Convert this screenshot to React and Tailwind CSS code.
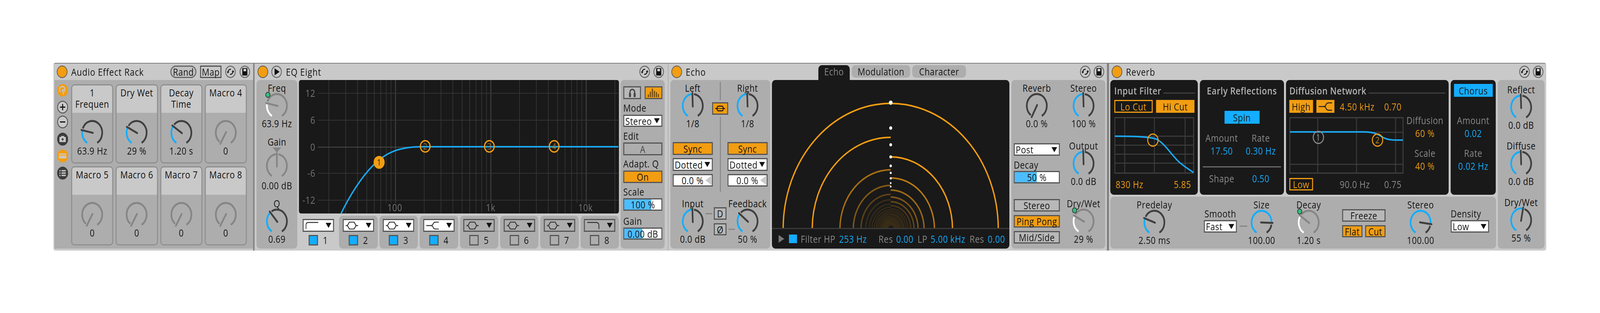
const ORANGE = "#f29d12";
const BLUE = "#14adff";

const polar = (a, r) => {
  const t = (a * Math.PI) / 180;
  return [36 + r * Math.sin(t), 34 - r * Math.cos(t)];
};

const arc = (from, to, r = 30) => {
  const [x1, y1] = polar(from, r);
  const [x2, y2] = polar(to, r);
  return `M${x1} ${y1}A${r} ${r} 0 ${to - from > 180 ? 1 : 0} 1 ${x2} ${y2}`;
};

const KNOB_COLORS = {
  on: { fill: BLUE, rest: "#3f3f3f", hand: "#3f3f3f" },
  off: { fill: "#858585", rest: "#858585", hand: "#858585" },
  dark: { fill: "#3f3f3f", rest: "#3f3f3f", hand: "#3f3f3f" },
  mod: { fill: "#ffffff", rest: "#858585", hand: "#858585" },
};

function Knob({ angle = 0, kind = "on" }) {
  const c = KNOB_COLORS[kind];
  const [hx, hy] = polar(angle, 33);
  const [bx, by] = polar(angle + 180, 2);
  return (
    <svg width="72" height="68" viewBox="0 0 72 68" className="block shrink-0 overflow-visible">
      {angle > -146 && <path d={arc(-150, angle - 3)} fill="none" stroke={c.fill} strokeWidth="5" />}
      <path d={arc(angle + 9, 150)} fill="none" stroke={c.rest} strokeWidth="5" />
      <line x1={bx} y1={by} x2={hx} y2={hy} stroke={c.hand} strokeWidth="5" strokeLinecap="round" />
      {kind === "mod" && <circle cx="9" cy="6" r="6.5" fill="#2fc27c" stroke="#333" strokeWidth="2" />}
    </svg>
  );
}

function Unit({ label, value, angle, kind, className = "w-[120px]" }) {
  return (
    <div className={`flex flex-col items-center ${className}`}>
      <div className="h-[28px] leading-[28px] whitespace-nowrap">{label}</div>
      <div className="-mt-[2px]"><Knob angle={angle} kind={kind} /></div>
      <div className="-mt-[3px] h-[28px] leading-[28px] whitespace-nowrap">{value}</div>
    </div>
  );
}

function Led() {
  return <div className="h-[32px] w-[32px] shrink-0 rounded-full border-2 border-[#5a5a5a] bg-[#f29d12]" />;
}

function Title({ children, className = "" }) {
  return <span className={`font-medium whitespace-nowrap tracking-[1px] text-[#111] ${className}`}>{children}</span>;
}

function HotSwap() {
  return (
    <svg width="32" height="32" viewBox="0 0 32 32" className="shrink-0">
      <circle cx="16" cy="16" r="14.5" fill="#c9c9c9" stroke="#666" strokeWidth="2.5" />
      <path d="M8.5 17a7.5 7.5 0 0 1 9-7.3M23.5 15a7.5 7.5 0 0 1-9 7.3" fill="none" stroke="#111" strokeWidth="2.6" />
      <path d="M4.8 15.5h7.4l-3.7 5zM27.2 16.5h-7.4l3.7-5z" fill="#111" />
    </svg>
  );
}

function Save() {
  return (
    <svg width="32" height="32" viewBox="0 0 32 32" className="shrink-0">
      <circle cx="16" cy="16" r="14.5" fill="#c9c9c9" stroke="#666" strokeWidth="2.5" />
      <path d="M9 7h14v18H9z" fill="#111" stroke="#111" strokeLinejoin="round" />
      <rect x="12" y="8.5" width="8" height="6" fill="#d8d8d8" />
    </svg>
  );
}

function Box({ className = "", children, tone = "bg-[#b8b8b8]" }) {
  return (
    <div className={`flex shrink-0 items-center justify-center whitespace-nowrap border-[3px] border-[#555] ${tone} ${className}`}>
      {children}
    </div>
  );
}

function Arrow({ fill = "#111" }) {
  return (
    <svg width="17" height="13" viewBox="0 0 17 13" className="shrink-0">
      <path d="M0 0h17L8.5 13z" fill={fill} />
    </svg>
  );
}

function Select({ text, className = "" }) {
  return (
    <div className={`flex shrink-0 items-center justify-between border-[3px] border-[#555] bg-white pl-[3px] pr-[5px] ${className}`}>
      <span className="whitespace-nowrap">{text}</span>
      <Arrow />
    </div>
  );
}

function Slider({ text, fill, className = "" }) {
  return (
    <div className={`relative flex shrink-0 items-center justify-center border-[3px] border-[#555] bg-white ${className}`}>
      <div className="absolute inset-y-0 left-0 bg-[#4dbdff]" style={{ width: fill }} />
      <span className="relative whitespace-nowrap">{text}</span>
    </div>
  );
}

function Device({ className = "", children }) {
  return <div className={`flex h-full shrink-0 flex-col ${className}`}>{children}</div>;
}

function TitleBar({ className = "", children }) {
  return <div className={`flex h-[42px] shrink-0 items-center ${className}`}>{children}</div>;
}

function SideIcon({ kind, className = "" }) {
  return (
    <svg width="33" height="33" viewBox="0 0 33 33" className={`shrink-0 ${className}`}>
      {kind === "hand" && (
        <>
          <circle cx="16.5" cy="16.5" r="16" fill={ORANGE} />
          <path d="M10.5 21a8 8 0 1 1 11-1M15 17a3 3 0 0 1 5-1M16 16l4 11" fill="none" stroke="#c9c9c9" strokeWidth="3" />
        </>
      )}
      {(kind === "plus" || kind === "minus") && (
        <>
          <circle cx="16.5" cy="16.5" r="15" fill="#c9c9c9" stroke="#555" strokeWidth="2.5" />
          <path d="M8.5 16.5h16" stroke="#111" strokeWidth="3" />
          {kind === "plus" && <path d="M16.5 8.5v16" stroke="#111" strokeWidth="3" />}
        </>
      )}
      {kind === "folder" && (
        <>
          <circle cx="16.5" cy="16.5" r="16.5" fill="#3c3c3c" />
          <path d="M7 11h5V8.5h9V11h5v13H7z" fill="#c9c9c9" />
          <path d="M16.5 13.5v7M13 17h7" stroke="#3c3c3c" strokeWidth="2.5" />
        </>
      )}
      {kind === "chain" && (
        <>
          <circle cx="16.5" cy="16.5" r="16.5" fill={ORANGE} />
          <rect x="5.5" y="10" width="22" height="13" rx="2" fill="#c9c9c9" />
          <path d="M6 14.5h21" stroke="#e8b45f" strokeWidth="5" />
        </>
      )}
      {kind === "list" && (
        <>
          <circle cx="16.5" cy="16.5" r="16.5" fill="#3c3c3c" />
          <path d="M13 10.5h13M13 16.5h13M13 22.5h13M7 10.5h3M7 16.5h3M7 22.5h3" stroke="#c9c9c9" strokeWidth="3.5" />
        </>
      )}
    </svg>
  );
}

const MACROS = [
  { label: ["1", "Frequen"], value: "63.9 Hz", angle: -78, kind: "on" },
  { label: ["Dry Wet"], value: "29 %", angle: -63, kind: "on" },
  { label: ["Decay", "Time"], value: "1.20 s", angle: -56, kind: "on" },
  { label: ["Macro 4"], value: "0", angle: -150, kind: "off" },
  { label: ["Macro 5"], value: "0", angle: -150, kind: "off" },
  { label: ["Macro 6"], value: "0", angle: -150, kind: "off" },
  { label: ["Macro 7"], value: "0", angle: -150, kind: "off" },
  { label: ["Macro 8"], value: "0", angle: -150, kind: "off" },
];

function Rack() {
  return (
    <Device className="w-[598px]">
      <TitleBar className="pl-[10px] pr-[9px]">
        <Led />
        <Title className="ml-[11px]">Audio Effect Rack</Title>
        <div className="ml-auto flex items-center gap-[11px]">
          <Box tone="bg-[#c0c0c0]" className="h-[32px] w-[78px] rounded-full !border-[#666]">Rand</Box>
          <Box tone="bg-[#c9c9c9]" className="h-[32px] w-[64px]">Map</Box>
          <HotSwap />
          <Save />
        </div>
      </TitleBar>
      <div className="ml-[3px] flex h-[432px] bg-[#adadad]">
        <div className="flex w-[50px] shrink-0 flex-col items-center pr-[1px] pt-[10px]">
          <SideIcon kind="hand" />
          <SideIcon kind="plus" className="mt-[10px]" />
          <SideIcon kind="minus" className="mt-[5px]" />
          <SideIcon kind="folder" className="mt-[11px]" />
          <SideIcon kind="chain" className="mt-[10px]" />
          <SideIcon kind="list" className="mt-[11px]" />
        </div>
        <div className="grid w-[526px] grid-cols-4 grid-rows-[203px_203px] gap-[7px] pt-[11px]">
          {MACROS.map((m) => (
            <div key={m.label.join(" ")} className="flex flex-col items-center overflow-hidden rounded-[10px] border-[3px] border-[#8f8f8f]">
              <div className="h-[70px] w-full bg-[#c9c9c9] pt-[4px] text-center leading-[29px]">
                {m.label.map((l) => <div key={l}>{l}</div>)}
              </div>
              <div className="pt-[17px]"><Knob angle={m.angle} kind={m.kind} /></div>
              <div className="-mt-[2px] h-[28px] leading-[28px]">{m.value}</div>
            </div>
          ))}
        </div>
      </div>
    </Device>
  );
}

const DECADES = [10, 100, 1000, 10000];
const FREQ_LINES = DECADES.flatMap((d) => [2, 3, 4, 5, 6, 7, 8, 9, 10].map((n) => n * d)).filter((f) => f >= 20 && f <= 20000);
const freqX = (f) => 289 + 285.5 * Math.log10(f / 100);
const isDecade = (f) => f === 100 || f === 1000 || f === 10000;
const stopsShort = (f) => [80, 90, 100, 900, 1000, 8000, 9000, 10000].includes(f);

function EqGraph() {
  const hLines = [34, 103, 172, 239, 308];
  const yLabels = ["12", "6", "0", "-6", "-12"];
  return (
    <svg width="958" height="342" viewBox="0 0 958 342" className="block overflow-visible rounded-[6px] bg-[#191919]">
      {FREQ_LINES.map((f) => (
        <line key={f} x1={freqX(f)} x2={freqX(f)} y1="0" y2={stopsShort(f) ? 315 : 342} stroke={isDecade(f) ? "#505050" : "#353535"} strokeWidth="2" />
      ))}
      {hLines.map((y, i) => (
        <line key={y} x1="57" x2="956" y1={y} y2={y} stroke={i === 2 ? "#4a4a4a" : "#333"} strokeWidth="2" />
      ))}
      {yLabels.map((t, i) => (
        <text key={t} x="49" y={hLines[i] + 9} textAnchor="end" fill="#757575" fontSize="25">{t}</text>
      ))}
      <text x="287" y="336" textAnchor="middle" fill="#757575" fontSize="25">100</text>
      <text x="574" y="336" textAnchor="middle" fill="#757575" fontSize="25">1k</text>
      <text x="858" y="336" textAnchor="middle" fill="#757575" fontSize="25">10k</text>
      <path d="M126 342C150 300 185 250 223 218C250 195 280 178 329 173C345 171 360 171 373 171H956" fill="none" stroke="#1aa8f2" strokeWidth="4" />
      <circle cx="240" cy="211" r="16.5" fill={ORANGE} />
      <text x="240" y="219" textAnchor="middle" fill="#222" fontSize="22">1</text>
      {[[378, "2"], [570, "3"], [764, "4"]].map(([x, t]) => (
        <g key={t}>
          <circle cx={x} cy="170" r="14.5" fill="none" stroke={ORANGE} strokeWidth="3.5" />
          <text x={x} y="178" textAnchor="middle" fill="#a87320" fontSize="22">{t}</text>
        </g>
      ))}
    </svg>
  );
}

function FilterIcon({ kind }) {
  const paths = {
    low: "M1 19V9Q1 2 8 2H38",
    bell: "M0 10H5L11 1H25L31 10H37M5 10L11 19H25L31 10",
    shelf: "M0 10H14Q19 10 21 5Q23 1 29 1H38M14 10Q19 10 21 15Q23 19 29 19H38",
    high: "M1 2H28Q36 2 36 10V19",
  };
  return (
    <svg width="38" height="20" viewBox="0 0 38 20" className="shrink-0">
      <path d={paths[kind]} fill="none" stroke="#333" strokeWidth="2.5" />
    </svg>
  );
}

const BANDS = [
  { n: 1, icon: "low", on: true, selected: true },
  { n: 2, icon: "bell", on: true },
  { n: 3, icon: "bell", on: true },
  { n: 4, icon: "shelf", on: true },
  { n: 5, icon: "bell" },
  { n: 6, icon: "bell" },
  { n: 7, icon: "bell" },
  { n: 8, icon: "high" },
];

function Band({ n, icon, on, selected }) {
  return (
    <div className={`flex flex-col items-center rounded-[10px] pt-[8px] ${selected ? "" : "bg-[#adadad]"}`}>
      <div className={`flex h-[33px] w-[94px] items-center justify-between border-[3px] border-[#555] pl-[6px] pr-[5px] ${on ? "bg-white" : ""}`}>
        <FilterIcon kind={icon} />
        <Arrow />
      </div>
      <div className="mt-[8px] flex h-[27px] items-center gap-[15px]">
        <div className={`h-[27px] w-[28px] border-[3px] border-[#555] ${on ? "bg-[#14adff]" : ""}`} />
        <span className="w-[15px] text-center leading-[27px]">{n}</span>
      </div>
    </div>
  );
}

function EqEight() {
  return (
    <Device className="w-[1238px]">
      <TitleBar className="pl-[9px] pr-[12px]">
        <Led />
        <svg width="32" height="32" viewBox="0 0 32 32" className="ml-[9px] shrink-0">
          <circle cx="16" cy="16" r="14.5" fill="#c9c9c9" stroke="#666" strokeWidth="2.5" />
          <path d="M10 7l15 9-15 9z" fill="#111" />
        </svg>
        <Title className="ml-[12px]">EQ Eight</Title>
        <div className="ml-auto flex items-center gap-[10px]">
          <HotSwap />
          <Save />
        </div>
      </TitleBar>
      <div className="flex h-[432px] pl-[6px]">
        <div className="flex w-[122px] shrink-0 flex-col items-center rounded-[10px] bg-[#adadad] pt-[6px]">
          <Unit label="Freq" value="63.9 Hz" angle={-78} kind="mod" />
          <div className="mt-[19px] h-[28px] leading-[28px]">Gain</div>
          <svg width="26" height="13" viewBox="0 0 26 13" className="mt-px shrink-0"><path d="M0 0h26L13 13z" fill="#858585" /></svg>
          <Knob angle={0} kind="off" />
          <div className="mt-[2px] h-[28px] leading-[28px]">0.00 dB</div>
          <div className="mt-[18px]"><Unit label="Q" value="0.69" angle={-41} /></div>
        </div>
        <div className="ml-[5px] flex w-[958px] shrink-0 flex-col">
          <EqGraph />
          <div className="mt-[6px] grid h-[84px] grid-cols-8 gap-[5px]">
            {BANDS.map((b) => <Band key={b.n} {...b} />)}
          </div>
        </div>
        <div className="ml-[5px] w-[132px] shrink-0 rounded-[10px] bg-[#adadad] pl-[8px] pt-[16px]">
          <div className="flex w-[117px] justify-between">
            <Box className="h-[33px] w-[53px]">
              <svg width="24" height="27" viewBox="0 0 24 27">
                <path d="M5 20V12a7 7 0 0 1 14 0v8" fill="none" stroke="#444" strokeWidth="3.5" />
                <rect x="2" y="14" width="6" height="11" rx="2" fill="#444" />
                <rect x="16" y="14" width="6" height="11" rx="2" fill="#444" />
              </svg>
            </Box>
            <Box tone="bg-[#f29d12]" className="h-[33px] w-[53px]">
              <svg width="36" height="22" viewBox="0 0 36 22">
                <path d="M2 22v-7M8 22V8M14 22V0M20 22V6M26 22V9M32 22v-8" stroke="#5d3f10" strokeWidth="3" />
              </svg>
            </Box>
          </div>
          <div className="mt-[8px] h-[28px] leading-[28px]">Mode</div>
          <Select text="Stereo" className="mt-[4px] h-[31px] w-[117px]" />
          <div className="mt-[9px] h-[28px] leading-[28px]">Edit</div>
          <Box tone="bg-[#adadad]" className="mt-[3px] h-[33px] w-[117px] text-[#444]">A</Box>
          <div className="mt-[7px] h-[28px] leading-[28px] whitespace-nowrap">Adapt. Q</div>
          <Box tone="bg-[#f29d12]" className="mt-[4px] h-[32px] w-[117px]">On</Box>
          <div className="mt-[8px] h-[28px] leading-[28px]">Scale</div>
          <Slider text="100 %" fill="73%" className="mt-[3px] h-[32px] w-[117px]" />
          <div className="mt-[12px] h-[28px] leading-[28px]">Gain</div>
          <Slider text="0.00 dB" fill="49%" className="mt-[3px] h-[31px] w-[117px]" />
        </div>
      </div>
    </Device>
  );
}

function TimeColumn({ label, angle }) {
  return (
    <div className="flex w-[120px] shrink-0 flex-col items-center pt-[6px]">
      <Unit label={label} value="1/8" angle={angle} />
      <Box tone="bg-[#f29d12]" className="mt-[34px] h-[33px] w-[120px]">Sync</Box>
      <Select text="Dotted" className="mt-[8px] h-[33px] w-[120px]" />
      <div className="mt-[8px] flex h-[32px] w-[120px] items-center justify-end border-[3px] border-[#555] bg-white pr-[1px]">
        <span className="whitespace-nowrap">0.0 %</span>
        <svg width="18" height="24" viewBox="0 0 18 24" className="ml-[6px] shrink-0"><path d="M18 0v24L0 12z" fill="#c9c9c9" /></svg>
      </div>
    </div>
  );
}

const LEFT_RINGS = [322, 235, 152, 112, 89, 75, 64, 56, 49, 43, 38, 33, 29, 25, 22, 19, 16, 13, 10];
const RIGHT_RINGS = [322, 185, 131, 100, 82, 70, 60, 52, 46, 40, 36, 31, 27, 24, 20, 17, 14, 11];
const DOTS = [[58, 5.5], [123, 4.5], [166, 4], [197, 4], [220, 3.5], [238, 3], [252, 3], [264, 2.5], [273, 2.5]];
const ringOpacity = (i, side) => Math.max(0.12, side === "r" ? 1 - i * 0.13 : 1 - i * 0.17);

function EchoDisplay() {
  const cx = 355.6;
  const base = 382;
  return (
    <svg width="711" height="379" viewBox="0 0 711 379" className="block">
      {LEFT_RINGS.map((r, i) => (
        <path key={`l${r}`} d={`M${cx - r} 382A${r} ${r} 0 0 1 ${cx} ${base - r}`} fill="none" stroke={ORANGE} strokeOpacity={i < 2 ? 1 : ringOpacity(i, "l")} strokeWidth="4" />
      ))}
      {RIGHT_RINGS.map((r, i) => (
        <path key={`r${r}`} d={`M${cx} ${base - r}A${r} ${r} 0 0 1 ${cx + r} 382`} fill="none" stroke={ORANGE} strokeOpacity={i < 2 ? 1 : ringOpacity(i, "r")} strokeWidth="4" />
      ))}
      {DOTS.map(([y, r]) => <circle key={y} cx={cx} cy={y} r={r} fill="#fff" />)}
    </svg>
  );
}

function Echo() {
  return (
    <Device className="w-[1313px]">
      <TitleBar className="pl-[9px] pr-[8px]">
        <Led />
        <Title className="ml-[11px] w-[397px]">Echo</Title>
        <div className="flex h-full items-start gap-[6px] pt-[4px]">
          <div className="flex h-[38px] w-[94px] items-center justify-center rounded-t-[10px] bg-[#191919] pb-[6px] text-[#8a8a8a]">Echo</div>
          <div className="flex h-[32px] w-[175px] items-center justify-center rounded-[10px] bg-[#adadad]">Modulation</div>
          <div className="flex h-[32px] w-[161px] items-center justify-center rounded-[10px] bg-[#adadad]">Character</div>
        </div>
        <div className="ml-auto flex items-center gap-[9px]">
          <HotSwap />
          <Save />
        </div>
      </TitleBar>
      <div className="flex h-[432px] pl-[6px]">
        <div className="w-[299px] shrink-0 rounded-[10px] bg-[#adadad] px-[7px]">
          <div className="flex h-[296px]">
            <TimeColumn label="Left" angle={-2} />
            <div className="flex w-[44px] shrink-0 flex-col items-center pt-[5px]">
              <div className="h-[46px] w-[3px] bg-[#858585]" />
              <Box tone="bg-[#f29d12]" className="mt-[6px] h-[32px] w-[48px]">
                <svg width="30" height="16" viewBox="0 0 30 16">
                  <path d="M0 8h6M24 8h6" stroke="#111" strokeWidth="2.5" />
                  <rect x="6" y="2" width="18" height="12" rx="3.5" fill="none" stroke="#111" strokeWidth="2.5" />
                  <path d="M6 8h18" stroke="#111" strokeWidth="1.5" />
                </svg>
              </Box>
              <div className="mt-[5px] h-[193px] w-[3px] bg-[#858585]" />
            </div>
            <TimeColumn label="Right" angle={-2} />
          </div>
          <div className="flex pt-[6px]">
            <Unit label="Input" value="0.0 dB" angle={-2} className="w-[120px] shrink-0" />
            <div className="w-[44px] shrink-0 pt-[24px]">
              <div className="-ml-[22px] flex w-max items-center gap-[5px]">
                <div className="h-[3px] w-[20px] bg-[#858585]" />
                <Box className="h-[32px] w-[38px]">D</Box>
              </div>
              <div className="ml-[3px] mt-[9px] flex w-max items-center gap-[6px]">
                <Box className="h-[31px] w-[38px]">Ø</Box>
                <div className="h-[3px] w-[19px] bg-[#858585]" />
              </div>
            </div>
            <Unit label="Feedback" value="50 %" angle={-51} className="w-[120px] shrink-0" />
          </div>
        </div>
        <div className="ml-[5px] flex w-[711px] shrink-0 flex-col overflow-hidden rounded-[10px] bg-[#191919]">
          <EchoDisplay />
          <div className="flex h-[53px] shrink-0 items-center border-t-[3px] border-[#3a3a3a] pl-[19px] text-[#8a8a8a]">
            <svg width="32" height="24" viewBox="0 0 32 24" className="shrink-0"><path d="M1 2l17 10L1 22z" fill="#777" /></svg>
            <div className="h-[22px] w-[24px] shrink-0 bg-[#14adff]" />
            <span className="ml-[11px] w-[115px] shrink-0 whitespace-nowrap">Filter HP</span>
            <span className="w-[118px] shrink-0 whitespace-nowrap text-[#14adff]">253 Hz</span>
            <span className="w-[53px] shrink-0">Res</span>
            <span className="w-[64px] shrink-0 text-[#14adff]">0.00</span>
            <span className="w-[39px] shrink-0">LP</span>
            <span className="w-[117px] shrink-0 whitespace-nowrap text-[#14adff]">5.00 kHz</span>
            <span className="w-[54px] shrink-0">Res</span>
            <span className="text-[#14adff]">0.00</span>
          </div>
        </div>
        <div className="ml-[6px] flex w-[281px] shrink-0 rounded-[10px] bg-[#adadad] pl-[7px] pt-[6px]">
          <div className="flex w-[138px] shrink-0 flex-col">
            <Unit label="Reverb" value="0.0 %" angle={-152} kind="dark" className="w-[138px]" />
            <Select text="Post" className="mt-[37px] h-[32px] w-[138px]" />
            <div className="mt-[9px] h-[28px] leading-[28px]">Decay</div>
            <Slider text="50 %" fill="50%" className="mt-[2px] h-[32px] w-[138px]" />
            <Box className="mt-[40px] h-[32px] w-[138px]">Stereo</Box>
            <Box tone="bg-[#f29d12]" className="mt-[9px] h-[32px] w-[138px]">Ping Pong</Box>
            <Box className="mt-[9px] h-[32px] w-[138px]">Mid/Side</Box>
          </div>
          <div className="ml-[6px] flex w-[130px] shrink-0 flex-col items-center">
            <Unit label="Stereo" value="100 %" angle={-2} />
            <div className="mt-[29px]"><Unit label="Output" value="0.0 dB" angle={-2} /></div>
            <div className="mt-[29px]"><Unit label="Dry/Wet" value="29 %" angle={-63} kind="mod" /></div>
          </div>
        </div>
      </div>
    </Device>
  );
}

function PanelTitle({ children, line = true }) {
  return (
    <div className="flex h-[28px] items-center gap-[6px]">
      <span className="whitespace-nowrap font-semibold text-[#b4b4b4]">{children}</span>
      {line && <div className="mt-[13px] h-[3px] flex-1 bg-[#3f3f3f]" />}
    </div>
  );
}

function DarkBtn({ filled, tone = "orange", className = "", children }) {
  const cls = filled
    ? tone === "orange" ? "bg-[#f29d12] text-[#191919]" : "bg-[#14adff] text-[#191919]"
    : "border-[3px] border-[#f29d12] text-[#f29d12]";
  return <div className={`flex shrink-0 items-center justify-center whitespace-nowrap ${cls} ${className}`}>{children}</div>;
}

function DarkParam({ label, value, color = "text-[#14adff]", className = "" }) {
  return (
    <div className={`flex flex-col items-center ${className}`}>
      <div className="h-[28px] leading-[28px] whitespace-nowrap text-[#8a8a8a]">{label}</div>
      <div className={`mt-[5px] h-[28px] leading-[28px] whitespace-nowrap ${color}`}>{value}</div>
    </div>
  );
}

function Grid({ w, h = 145, xs, ys, children }) {
  return (
    <svg width={w} height={h} viewBox={`0 0 ${w} ${h}`} className="block shrink-0">
      <rect x="1.5" y="1.5" width={w - 3} height={h - 3} fill="none" stroke="#3f3f3f" strokeWidth="3" />
      {xs.map((x) => <line key={x} x1={x} x2={x} y1="0" y2={h} stroke="#3f3f3f" strokeWidth="2.5" />)}
      {ys.map((y) => <line key={y} y1={y} y2={y} x1="0" x2={w} stroke="#3f3f3f" strokeWidth="2.5" />)}
      {children}
    </svg>
  );
}

function Reverb() {
  return (
    <Device className="w-[1309px]">
      <TitleBar className="pl-[8px] pr-[8px]">
        <Led />
        <Title className="ml-[11px]">Reverb</Title>
        <div className="ml-auto flex items-center gap-[9px]">
          <HotSwap />
          <Save />
        </div>
      </TitleBar>
      <div className="flex h-[432px] pl-[4px]">
        <div className="flex w-[1155px] shrink-0 flex-col">
          <div className="flex h-[294px] gap-[6px]">
            <div className="w-[262px] shrink-0 rounded-[10px] bg-[#191919] pl-[12px] pr-[8px] pt-[13px]">
              <PanelTitle>Input Filter</PanelTitle>
              <div className="mt-[10px] flex w-[240px] justify-between">
                <DarkBtn className="h-[33px] w-[115px]">Lo Cut</DarkBtn>
                <DarkBtn filled className="h-[33px] w-[115px]">Hi Cut</DarkBtn>
              </div>
              <div className="mt-[11px]">
                <Grid w={239} xs={[31, 120, 212]} ys={[49, 72, 95, 118]}>
                  <path d="M2 49C60 49 100 50 125 56C150 66 170 96 195 116C210 127 225 135 237 142" fill="none" stroke="#1aa8f2" strokeWidth="4" />
                  <ellipse cx="115.5" cy="59" rx="15.5" ry="15.5" fill="none" stroke={ORANGE} strokeWidth="3" />
                </Grid>
              </div>
              <div className="mt-[13px] flex h-[28px] w-[230px] justify-between pl-[4px] leading-[28px] text-[#f29d12]">
                <span>830 Hz</span>
                <span>5.85</span>
              </div>
            </div>
            <div className="w-[252px] shrink-0 rounded-[10px] bg-[#191919] pt-[13px]">
              <div className="flex justify-center"><PanelTitle line={false}>Early Reflections</PanelTitle></div>
              <DarkBtn filled tone="blue" className="mx-auto mt-[38px] h-[33px] w-[105px]">Spin</DarkBtn>
              <div className="ml-[7px] mt-[22px] grid w-[234px] grid-cols-2">
                <DarkParam label="Amount" value="17.50" />
                <DarkParam label="Rate" value="0.30 Hz" />
              </div>
              <div className="mx-[9px] mt-[26px] h-[3px] bg-[#6a6a6a]" />
              <div className="ml-[7px] mt-[14px] grid h-[28px] w-[234px] grid-cols-2 text-center leading-[28px]">
                <span className="text-[#8a8a8a]">Shape</span>
                <span className="text-[#14adff]">0.50</span>
              </div>
            </div>
            <div className="w-[487px] shrink-0 rounded-[10px] bg-[#191919] pl-[10px] pr-[10px] pt-[13px]">
              <PanelTitle>Diffusion Network</PanelTitle>
              <div className="mt-[10px] flex h-[33px] items-center text-[#f29d12]">
                <DarkBtn filled className="h-[33px] w-[71px]">High</DarkBtn>
                <DarkBtn filled className="ml-[10px] h-[33px] w-[54px]">
                  <svg width="40" height="24" viewBox="0 0 38 20"><path d="M0 10H14Q19 10 21 5Q23 1 29 1H38M14 10Q19 10 21 15Q23 19 29 19H38" fill="none" stroke="#222" strokeWidth="2.5" /></svg>
                </DarkBtn>
                <span className="ml-[16px] w-[133px] whitespace-nowrap">4.50 kHz</span>
                <span>0.70</span>
              </div>
              <div className="mt-[11px] flex">
                <Grid w={342} xs={[85, 201, 318]} ys={[39, 121]}>
                  <path d="M2 38H225C250 38 265 43 280 52C295 59 310 59 340 59" fill="none" stroke="#1aa8f2" strokeWidth="4" />
                  <circle cx="87" cy="52" r="15.5" fill="none" stroke="#8a8a8a" strokeWidth="3" />
                  <text x="87" y="60" textAnchor="middle" fill="#8a8a8a" fontSize="22">1</text>
                  <circle cx="264" cy="59" r="15.5" fill="none" stroke={ORANGE} strokeWidth="3" />
                  <text x="264" y="67" textAnchor="middle" fill="#c98a20" fontSize="22">2</text>
                </Grid>
                <div className="ml-[4px] flex w-[120px] shrink-0 flex-col items-center">
                  <DarkParam label="Diffusion" value="60 %" color="text-[#f29d12]" className="-mt-[6px]" />
                  <DarkParam label="Scale" value="40 %" color="text-[#f29d12]" className="mt-[23px]" />
                </div>
              </div>
              <div className="mt-[11px] flex h-[32px] items-center text-[#8a8a8a]">
                <DarkBtn className="h-[32px] w-[71px]">Low</DarkBtn>
                <span className="ml-[80px] w-[133px] whitespace-nowrap">90.0 Hz</span>
                <span>0.75</span>
              </div>
            </div>
            <div className="flex w-[135px] shrink-0 flex-col items-center rounded-[10px] bg-[#191919] pt-[10px]">
              <DarkBtn filled tone="blue" className="h-[33px] w-[116px]">Chorus</DarkBtn>
              <DarkParam label="Amount" value="0.02" className="mt-[46px]" />
              <DarkParam label="Rate" value="0.02 Hz" className="mt-[23px]" />
            </div>
          </div>
          <div className="mt-[5px] flex h-[133px] rounded-[10px] bg-[#adadad] pt-[6px]">
            <Unit label="Predelay" value="2.50 ms" angle={-70} className="ml-[72px] w-[120px] shrink-0" />
            <div className="ml-[88px] flex w-[99px] shrink-0 flex-col pt-[23px]">
              <div className="h-[28px] text-center leading-[28px]">Smooth</div>
              <Select text="Fast" className="mt-[3px] h-[32px] w-[99px]" />
            </div>
            <div className="ml-[8px] mt-[68px] h-[3px] w-[23px] bg-[#858585]" />
            <Unit label="Size" value="100.00" angle={92} className="w-[86px] shrink-0" />
            <Unit label="Decay" value="1.20 s" angle={-56} kind="mod" className="ml-[48px] w-[100px] shrink-0" />
            <div className="ml-[50px] flex w-[130px] shrink-0 flex-col pt-[26px]">
              <Box className="h-[32px] w-[130px]">Freeze</Box>
              <div className="mt-[9px] flex justify-between">
                <Box tone="bg-[#f29d12]" className="h-[31px] w-[61px]">Flat</Box>
                <Box tone="bg-[#f29d12]" className="h-[31px] w-[61px]">Cut</Box>
              </div>
            </div>
            <Unit label="Stereo" value="100.00" angle={98} className="ml-[55px] w-[100px] shrink-0" />
            <div className="ml-[40px] flex w-[115px] shrink-0 flex-col pt-[23px]">
              <div className="h-[28px] leading-[28px]">Density</div>
              <Select text="Low" className="mt-[3px] h-[32px] w-[115px]" />
            </div>
          </div>
        </div>
        <div className="ml-[5px] flex w-[140px] shrink-0 flex-col items-center rounded-[10px] bg-[#adadad] pt-[10px]">
          <Unit label="Reflect" value="0.0 dB" angle={-2} />
          <div className="mt-[25px]"><Unit label="Diffuse" value="0.0 dB" angle={-2} /></div>
          <div className="mt-[26px]"><Unit label="Dry/Wet" value="55 %" angle={11} /></div>
        </div>
      </div>
    </Device>
  );
}

// the sandbox window tops out at 4096px wide, so the 4790px board is fitted to it on x
export default function App() {
  return (
    <div className="h-[802px] w-full overflow-hidden bg-white">
      <div className="h-[802px] w-[4790px] origin-top-left scale-x-[0.8551] pl-[160px] pt-[161px] font-['Open_Sans','Liberation_Sans',sans-serif] text-[25px] leading-[28px] tracking-[0.6px] text-[#111]">
        <div className="flex h-[481px] w-[4469px] overflow-hidden rounded-[6px] border-t-2 border-[#808080] bg-[#c9c9c9]">
          <Rack />
          <div className="w-[4px] shrink-0 bg-[#7f7f7f]" />
          <EqEight />
          <div className="w-[1px] shrink-0 bg-[#8f8f8f]" />
          <Echo />
          <div className="w-[6px] shrink-0 bg-[#7f7f7f]" />
          <Reverb />
        </div>
      </div>
    </div>
  );
}
